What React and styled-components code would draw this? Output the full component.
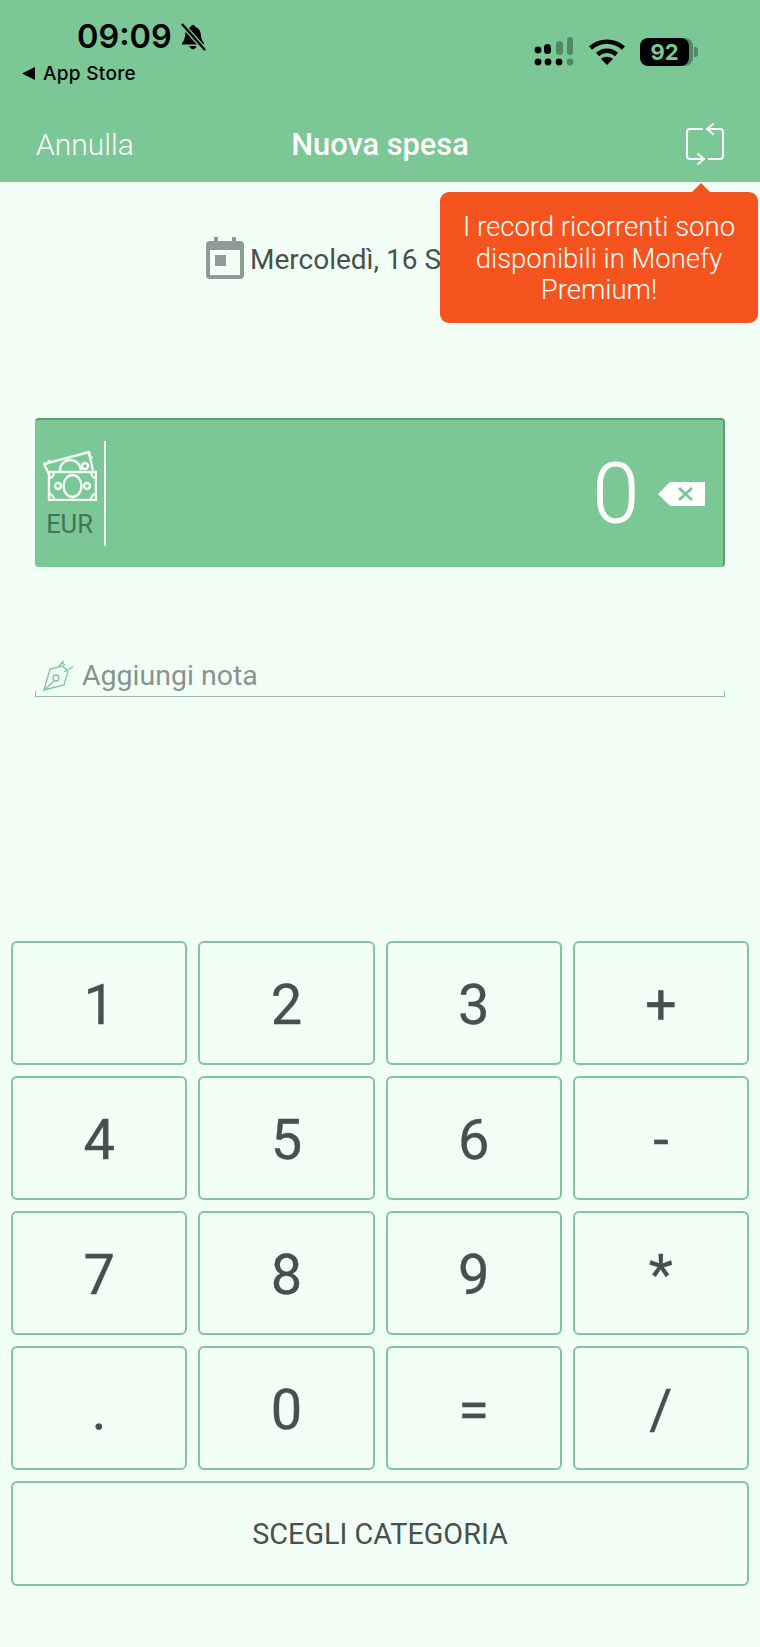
import React from 'react';
import styled, { createGlobalStyle } from 'styled-components';

const GlobalStyle = createGlobalStyle`
  html, body {
    margin: 0;
    padding: 0;
    background: #f2fff6;
  }
  * {
    box-sizing: border-box;
  }
`

const Page = styled.div`
  position: relative;
  display: flex;
  flex-direction: column;
  width: 760px;
  height: 1647px;
  overflow: hidden;
  background: #f2fff6;
  font-family: Roboto, "Liberation Sans", sans-serif;
`

const Header = styled.header`
  display: flex;
  flex-direction: column;
  height: 182px;
  background: #7bc796;
`

const StatusBar = styled.div`
  display: flex;
  justify-content: space-between;
  height: 112px;
  padding: 19px 62px 0 22px;
  font-family: Inter, "Liberation Sans", sans-serif;
  color: #000;
`

const StatusLeft = styled.div`
  display: flex;
  flex-direction: column;
`

const TimeRow = styled.div`
  display: flex;
  align-items: center;
  gap: 7px;
  height: 36px;
  padding-left: 55px;
  font-size: 32.5px;
  font-weight: 600;
  line-height: 36px;
`

const BackRow = styled.div`
  display: flex;
  align-items: center;
  gap: 8px;
  height: 24px;
  margin-top: 6px;
  font-size: 19px;
  font-weight: 500;
  letter-spacing: 0.3px;
`

const StatusRight = styled.div`
  display: flex;
  align-items: center;
  gap: 14px;
  height: 32px;
  margin-top: 17px;
`

const Battery = styled.div`
  display: flex;
  align-items: center;
`

const BatteryBody = styled.div`
  display: flex;
  align-items: center;
  justify-content: center;
  width: 49px;
  height: 28px;
  border-radius: 8px;
  background: #000;
  color: #7bc796;
  font-size: 22px;
  font-weight: 700;
  box-shadow: 4px 0 0 #4f8a64;
`

const BatteryTip = styled.div`
  width: 4px;
  height: 10px;
  margin-left: 5px;
  border-radius: 0 3px 3px 0;
  background: #4f8a64;
`

const NavBar = styled.nav`
  display: grid;
  grid-template-columns: 1fr auto 1fr;
  align-items: center;
  height: 44px;
  margin-top: 10px;
  padding: 0 36px;
  color: #fff;
`

const NavCancel = styled.div`
  font-size: 30px;
  font-weight: 300;
`

const NavTitle = styled.div`
  font-size: 30.8px;
  font-weight: 500;
`

const NavAction = styled.div`
  display: flex;
  justify-content: flex-end;
`

const Tooltip = styled.div`
  position: absolute;
  top: 192px;
  left: 440px;
  width: 318px;
  height: 131px;
  padding: 19px 16px 0;
  border-radius: 9px;
  background: #f6541e;
  color: #fff;
  font-size: 27.5px;
  font-weight: 300;
  line-height: 31.5px;
  text-align: center;

  &::before {
    content: "";
    position: absolute;
    top: -9px;
    left: 252px;
    border-left: 9px solid transparent;
    border-right: 9px solid transparent;
    border-bottom: 9px solid #f6541e;
  }
`

const DateRow = styled.div`
  display: flex;
  align-items: center;
  gap: 6px;
  height: 42px;
  margin-top: 55px;
  padding-left: 206px;
  color: #48504c;
  font-size: 28px;
  white-space: nowrap;
`

const DateLabel = styled.span`
  padding-top: 3px;
`

const AmountCard = styled.div`
  display: flex;
  align-items: stretch;
  height: 149px;
  margin: 139px 35px 0;
  padding: 21px 18px 21px 0;
  border-radius: 4px;
  background: #7bc796;
  border-top: 2px solid #5c9e74;
  border-right: 2px solid #5c9e74;
`

const Currency = styled.div`
  display: flex;
  flex-direction: column;
  align-items: center;
  width: 71px;
  padding-top: 10px;
  border-right: 2px solid #f2fff6;
`

const CurrencyLabel = styled.div`
  margin-top: 9px;
  color: #447355;
  font-size: 25.5px;
  line-height: 28px;
`

const AmountValue = styled.div`
  display: flex;
  flex: 1;
  align-items: center;
  justify-content: flex-end;
  gap: 19px;
  color: #fff;
  font-size: 84px;
  font-weight: 300;
  -webkit-text-stroke: 0.8px #fff;
`

const NoteRow = styled.div`
  display: flex;
  align-items: center;
  gap: 8px;
  height: 47px;
  margin: 83px 35px 0;
  padding: 4px 0 0 7px;
  border-bottom: 1.5px solid #9db5a6;
  border-left: 1px solid #9db5a6;
  border-right: 1px solid #9db5a6;
  border-image: linear-gradient(to top, #9db5a6 6px, transparent 6px) 1;
  color: #87958c;
  font-size: 28.5px;
`

const Keypad = styled.div`
  display: grid;
  grid-template-columns: repeat(4, 1fr);
  grid-template-rows: repeat(4, 124px) 105px;
  gap: 11px;
  margin-top: auto;
  padding: 0 11px 61px;
`

const Key = styled.div`
  display: flex;
  align-items: center;
  justify-content: center;
  padding-top: 3px;
  border: 2px solid #80c59b;
  border-radius: 6px;
  color: #48504c;
  font-size: 56px;
  -webkit-text-stroke: 0.3px #48504c;
`

const CategoryKey = styled(Key)`
  grid-column: 1 / -1;
  padding-top: 0;
  font-size: 28.8px;
  -webkit-text-stroke: 0;
`

const keys = ['1', '2', '3', '+', '4', '5', '6', '-', '7', '8', '9', '*', '.', '0', '=', '/'];

const BellOff = () => (
  <svg width="28" height="28" viewBox="0 0 28 28">
    <path d="M14 2c1.400 0 2.200.9 2.300 2 3.600 1 5.400 4 5.600 8 .2 3.400 1.200 6 3.100 8v1.500H3V20c1.900-2 2.900-4.600 3.100-8 .2-4 2-7 5.600-8 .1-1.100.9-2 2.300-2zM10.500 23h7c-.3 2-1.700 3.200-3.500 3.200s-3.200-1.200-3.500-3.200z" fill="#000" />
    <path d="M3 1l23 26" stroke="#7bc796" strokeWidth="5" />
    <path d="M3 1l23 26" stroke="#000" strokeWidth="2.400" />
  </svg>
);

const Signal = () => (
  <svg width="40" height="30" viewBox="0 0 40 30">
    <g fill="#000">
      <circle cx="4" cy="13" r="3.400" />
      <rect x="10" y="7" width="7" height="10" rx="3.500" />
      <circle cx="4" cy="25" r="3.400" />
      <circle cx="14" cy="25" r="3.400" />
      <circle cx="25" cy="25" r="3.400" />
    </g>
    <g fill="#4f8a64">
      <rect x="22" y="4" width="7" height="14" rx="3.500" />
      <rect x="33" y="0" width="6" height="18" rx="3" />
      <circle cx="36" cy="25" r="3.400" />
    </g>
  </svg>
);

const Wifi = () => (
  <svg width="38" height="28" viewBox="0 0 38 28" fill="none" stroke="#000" strokeWidth="4.500">
    <path d="M2.500 10C11.500 1.500 26.500 1.500 35.500 10" />
    <path d="M9.500 16.500c5.500-5 13.500-5 19 0" />
    <path d="M19 27l-6-6c3.500-3 8.500-3 12 0z" fill="#000" stroke="none" />
  </svg>
);

const BackTriangle = () => (
  <svg width="13" height="13" viewBox="0 0 13 13">
    <path d="M0 6.500L13 0v13z" fill="#000" />
  </svg>
);

const RepeatIcon = () => (
  <svg width="38" height="42" viewBox="0 0 38 42" fill="none" stroke="#fff" strokeWidth="2" strokeLinecap="round" strokeLinejoin="round">
    <path d="M16 6H4a3 3 0 0 0-3 3v24a3 3 0 0 0 3 3h14" />
    <path d="M21 6h13a3 3 0 0 1 3 3v24a3 3 0 0 1-3 3H23" />
    <path d="M27 1l-6 5 6 5" />
    <path d="M12 31l6 5-6 5" />
  </svg>
);

const CalendarIcon = () => (
  <svg width="38" height="42" viewBox="0 0 38 42">
    <path d="M8 0h4v4h14V0h4v4h4a4 4 0 0 1 4 4v30a4 4 0 0 1-4 4H4a4 4 0 0 1-4-4V8a4 4 0 0 1 4-4h4z" fill="#8f9b95" />
    <rect x="4" y="13" width="30" height="25" fill="#f2fff6" />
    <rect x="9" y="18" width="11" height="11" fill="#8f9b95" />
  </svg>
);

const BanknotesIcon = () => (
  <svg width="54" height="50" viewBox="0 0 54 50" fill="none" stroke="#f2fff6" strokeWidth="2.400">
    <path d="M6 23L1 13 46 1 50 20" />
    <path d="M1 13c3 0 5-1.500 5.500-4M46 1c-.5 3 1 5 3.500 6" />
    <path d="M17 20c0-14 19-15 21-1" />
    <circle cx="42" cy="15" r="3" />
    <rect x="6" y="21" width="47" height="28" />
    <ellipse cx="29.500" cy="35" rx="9" ry="11" />
    <circle cx="15" cy="35" r="3" />
    <circle cx="44" cy="35" r="3" />
    <path d="M6 27c3 0 5-3 5-6M53 27c-3 0-5-3-5-6M6 43c3 0 5 3 5 6M53 43c-3 0-5 3-5 6" />
  </svg>
);

const BackspaceIcon = () => (
  <svg width="47" height="24" viewBox="0 0 47 24">
    <path d="M12 0h35v24H12L0 12z" fill="#fff" />
    <path d="M21 6l13 12M34 6L21 18" stroke="#7bc796" strokeWidth="3" />
  </svg>
);

const PenIcon = () => (
  <svg width="31" height="31" viewBox="0 0 31 31" fill="none" stroke="#7bc796" strokeWidth="1.300">
    <path d="M1 30L7 9l13-3 5 6-4 13z" />
    <path d="M1 30l10-9" />
    <circle cx="13" cy="18" r="3" />
    <path d="M16 6l5-5M21 12l9-5M18 2l4 3" />
  </svg>
);

const App = () => {
  return (
    <Page>
      <GlobalStyle />
      <Header>
        <StatusBar>
          <StatusLeft>
            <TimeRow>
              09:09
              <BellOff />
            </TimeRow>
            <BackRow>
              <BackTriangle />
              App Store
            </BackRow>
          </StatusLeft>
          <StatusRight>
            <Signal />
            <Wifi />
            <Battery>
              <BatteryBody>92</BatteryBody>
              <BatteryTip />
            </Battery>
          </StatusRight>
        </StatusBar>
        <NavBar>
          <NavCancel>Annulla</NavCancel>
          <NavTitle>Nuova spesa</NavTitle>
          <NavAction>
            <RepeatIcon />
          </NavAction>
        </NavBar>
      </Header>

      <Tooltip>I record ricorrenti sono disponibili in Monefy Premium!</Tooltip>

      <DateRow>
        <CalendarIcon />
        <DateLabel>Mercoledì, 16 Settembre</DateLabel>
      </DateRow>

      <AmountCard>
        <Currency>
          <BanknotesIcon />
          <CurrencyLabel>EUR</CurrencyLabel>
        </Currency>
        <AmountValue>
          0
          <BackspaceIcon />
        </AmountValue>
      </AmountCard>

      <NoteRow>
        <PenIcon />
        Aggiungi nota
      </NoteRow>

      <Keypad>
        {keys.map(key => (
          <Key key={key}>{key}</Key>
        ))}
        <CategoryKey>SCEGLI CATEGORIA</CategoryKey>
      </Keypad>
    </Page>
  )
}

export default App;
